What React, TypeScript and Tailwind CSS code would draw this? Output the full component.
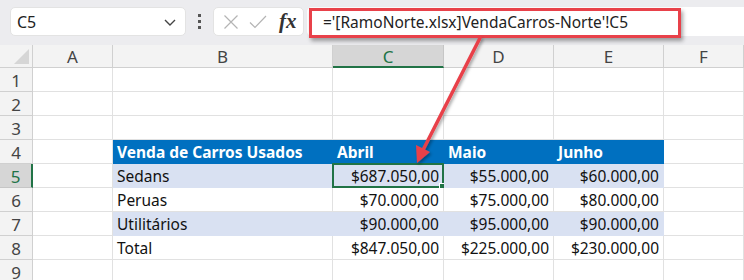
import React from "react";

type Cell = {
  text?: string;
  align?: "left" | "right";
  fill?: "blue" | "band";
  bold?: boolean;
  selected?: boolean;
};

const rows: { n: number; cells: Cell[] }[] = [
  { n: 1, cells: [{}, {}, {}, {}, {}, {}] },
  { n: 2, cells: [{}, {}, {}, {}, {}, {}] },
  { n: 3, cells: [{}, {}, {}, {}, {}, {}] },
  {
    n: 4,
    cells: [
      {},
      { text: "Venda de Carros Usados", fill: "blue", bold: true },
      { text: "Abril", fill: "blue", bold: true },
      { text: "Maio", fill: "blue", bold: true },
      { text: "Junho", fill: "blue", bold: true },
      {},
    ],
  },
  {
    n: 5,
    cells: [
      {},
      { text: "Sedans", fill: "band" },
      { text: "$687.050,00", fill: "band", align: "right", selected: true },
      { text: "$55.000,00", fill: "band", align: "right" },
      { text: "$60.000,00", fill: "band", align: "right" },
      {},
    ],
  },
  {
    n: 6,
    cells: [
      {},
      { text: "Peruas" },
      { text: "$70.000,00", align: "right" },
      { text: "$75.000,00", align: "right" },
      { text: "$80.000,00", align: "right" },
      {},
    ],
  },
  {
    n: 7,
    cells: [
      {},
      { text: "Utilitários", fill: "band" },
      { text: "$90.000,00", fill: "band", align: "right" },
      { text: "$95.000,00", fill: "band", align: "right" },
      { text: "$90.000,00", fill: "band", align: "right" },
      {},
    ],
  },
  {
    n: 8,
    cells: [
      {},
      { text: "Total" },
      { text: "$847.050,00", align: "right" },
      { text: "$225.000,00", align: "right" },
      { text: "$230.000,00", align: "right" },
      {},
    ],
  },
  { n: 9, cells: [{}, {}, {}, {}, {}, {}] },
];

const cols = ["A", "B", "C", "D", "E", "F"];

function DataCell({ c }: { c: Cell }) {
  const bg =
    c.fill === "blue"
      ? "bg-[#0070c0] border-[#0070c0] text-white"
      : c.fill === "band"
      ? "bg-[#d9e1f2] border-[#d9e1f2] text-[#111]"
      : "bg-white border-[#e1e1e1] text-[#111]";
  return (
    <div
      className={`relative h-[24px] border-r border-b ${bg} flex items-center overflow-visible whitespace-nowrap px-[4px] ${
        c.align === "right" ? "justify-end" : "justify-start"
      } ${c.bold ? "font-bold" : ""}`}
    >
      <span className="text-[15.5px] leading-none pt-[2px]">{c.text}</span>
      {c.selected && (
        <>
          <div className="absolute left-[-1px] top-[-1px] right-[-1px] bottom-[-1px] border-2 border-[#217346] pointer-events-none" />
          <div className="absolute right-[-3px] bottom-[-3px] w-[5px] h-[5px] bg-[#217346] border border-white box-content" />
        </>
      )}
    </div>
  );
}

export default function App() {
  return (
    <div
      className="relative w-[744px] h-[280px] overflow-hidden bg-white"
      style={{ fontFamily: '"Noto Sans", "Open Sans", sans-serif' }}
    >
      {/* Toolbar */}
      <div className="h-[45px] bg-[#ececef] flex items-start pt-[7px]">
        <div className="ml-[10px] w-[176px] h-[29px] bg-white rounded-[5px] border border-[#e3e3e3] flex items-center justify-between pl-[6px] pr-[8px]">
          <span className="text-[16px] text-[#222]">C5</span>
          <svg width="14" height="14" viewBox="0 0 14 14">
            <path d="M2 5 L7 10 L12 5" fill="none" stroke="#444" strokeWidth="1.4" />
          </svg>
        </div>
        <div className="w-[27px] h-[29px] flex flex-col items-center justify-center gap-[3px]">
          <div className="w-[3px] h-[3px] bg-[#555]" />
          <div className="w-[3px] h-[3px] bg-[#555]" />
          <div className="w-[3px] h-[3px] bg-[#555]" />
        </div>
        <div className="w-[91px] h-[29px] bg-white rounded-[5px] border border-[#e3e3e3] flex items-center pl-[9px]">
          <svg width="16" height="16" viewBox="0 0 16 16">
            <path d="M1.5 1.5 L14.5 14.5 M14.5 1.5 L1.5 14.5" stroke="#b4b4b4" strokeWidth="1.2" fill="none" />
          </svg>
          <svg width="18" height="16" viewBox="0 0 18 16" className="ml-[10px]">
            <path d="M1 8.5 L6 13.5 L17 2" stroke="#b4b4b4" strokeWidth="1.2" fill="none" />
          </svg>
          <span
            className="ml-[12px] text-[21px] italic leading-none text-[#333] font-bold"
            style={{ fontFamily: '"Liberation Serif", "DejaVu Serif", serif' }}
          >
            fx
          </span>
        </div>
        <div className="ml-[3px] flex-1 h-[29px] bg-white rounded-l-[5px] relative">
          <div className="absolute left-[2px] top-[1px] w-[372px] h-[30px] border-[3px] border-[#e8414a] shadow-[2px_3px_4px_rgba(0,0,0,0.35)] flex items-center pl-[11px]">
            <span className="text-[15.5px] text-[#222] whitespace-nowrap leading-none">
              ='[RamoNorte.xlsx]VendaCarros-Norte'!C5
            </span>
          </div>
        </div>
      </div>

      {/* Sheet grid */}
      <div className="grid grid-cols-[33px_80px_220px_111px_110px_110px_80px]">
        <div className="h-[23px] bg-[#f3f3f3] border-r border-b border-[#d0d0d0] relative overflow-hidden">
          <div className="absolute right-[3px] bottom-[3px] w-0 h-0 border-l-[15px] border-l-transparent border-b-[15px] border-b-[#d6d6d6]" />
        </div>
        {cols.map((c) => (
          <div
            key={c}
            className={`h-[23px] flex items-center justify-center text-[17px] border-r ${
              c === "C"
                ? "bg-[#d6d6d6] text-[#217346] border-b-2 border-b-[#217346] border-r-[#c6c6c6]"
                : "bg-[#f3f3f3] text-[#444] border-b border-[#d0d0d0]"
            }`}
          >
            <span className="leading-none pt-[1px]">{c}</span>
          </div>
        ))}
        {rows.map((r) => (
          <React.Fragment key={r.n}>
            <div
              className={`h-[24px] flex items-center justify-center text-[17px] border-b ${
                r.n === 5
                  ? "bg-[#d6d6d6] text-[#217346] border-r-2 border-r-[#217346] border-b-[#c6c6c6]"
                  : "bg-[#f3f3f3] text-[#444] border-r border-[#d0d0d0]"
              }`}
            >
              <span className="leading-none pt-[2px]">{r.n}</span>
            </div>
            {r.cells.map((c, i) => (
              <DataCell key={i} c={c} />
            ))}
          </React.Fragment>
        ))}
      </div>

      {/* Annotation arrow */}
      <svg
        className="absolute left-0 top-0 pointer-events-none"
        width="744"
        height="280"
        viewBox="0 0 744 280"
      >
        <defs>
          <filter id="sh" x="-50%" y="-50%" width="200%" height="200%">
            <feDropShadow dx="1.5" dy="2" stdDeviation="1.5" floodColor="#000" floodOpacity="0.35" />
          </filter>
        </defs>
        <g filter="url(#sh)">
          <line x1="480" y1="38" x2="423" y2="150" stroke="#e8414a" strokeWidth="3.5" strokeLinecap="round" />
          <polygon points="417,163 430,152 416,145" fill="#e8414a" />
        </g>
      </svg>
    </div>
  );
}
